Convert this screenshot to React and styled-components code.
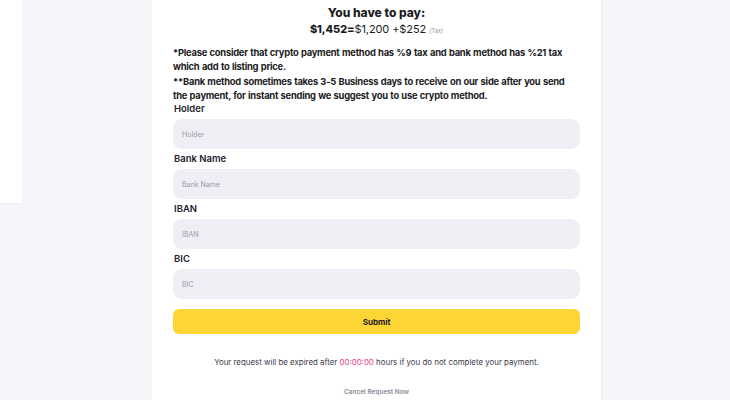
import React from 'react'
import styled, { createGlobalStyle } from 'styled-components'

const Global = createGlobalStyle`
  body {
    margin: 0;
    background: #f5f5fa;
    font-family: Inter, "Open Sans", sans-serif;
    color: #1c1c24;
  }
`

const Page = styled.div`
  display: flex;
  align-items: flex-start;
  height: 400px;
  overflow: hidden;
`

const SidePanel = styled.div`
  width: 22px;
  height: 203px;
  flex-shrink: 0;
  background: #fff;
  box-shadow: 0 1px 2px rgba(0, 0, 0, 0.04);
`

const Card = styled.div`
  margin-left: 130px;
  width: 449px;
  min-height: 400px;
  flex-shrink: 0;
  background: #fff;
  box-sizing: border-box;
  padding: 4px 21px 20px 21px;
  display: flex;
  flex-direction: column;
  box-shadow: 1px 0 2px rgba(0, 0, 0, 0.04);
`

const Title = styled.div`
  text-align: center;
  font-size: 12px;
  font-weight: 800;
  line-height: 17px;
`

const Total = styled.div`
  text-align: center;
  font-size: 11px;
  line-height: 16px;
  font-weight: 400;
  letter-spacing: -0.1px;
  b { font-weight: 800; }
  small { font-size: 6px; color: #9a9aa6; margin-left: 3px; }
`

const Note = styled.p`
  margin: ${p => (p.first ? '7px' : '1px')} 0 0 0;
  font-size: 9.4px;
  font-weight: 700;
  line-height: 14px;
  letter-spacing: -0.25px;
  word-spacing: 0.5px;
`

const Field = styled.div`
  display: flex;
  flex-direction: column;
  margin-top: ${p => (p.first ? '-1px' : '3px')};
`

const Label = styled.label`
  font-size: 9.5px;
  font-weight: 600;
  line-height: 14px;
  padding-left: 1px;
  color: #22222c;
`

const Input = styled.input`
  margin-top: 3px;
  height: 30px;
  box-sizing: border-box;
  border: none;
  outline: none;
  border-radius: 9px;
  background: #eeeef4;
  padding: 0 9px;
  font-family: inherit;
  font-size: 7px;
  color: #333;
  &::placeholder { color: #9b9bab; }
`

const Submit = styled.button`
  margin-top: 10px;
  height: 25px;
  flex-shrink: 0;
  border: none;
  border-radius: 6px;
  background: #fdd535;
  font-family: inherit;
  font-size: 8px;
  font-weight: 700;
  color: #1c1c24;
`

const Expire = styled.div`
  margin-top: 22px;
  text-align: center;
  font-size: 7.9px;
  line-height: 12px;
  color: #3a3a48;
  span { color: #ec3e8b; }
`

const Cancel = styled.div`
  margin-top: 20px;
  text-align: center;
  font-size: 6.5px;
  font-weight: 600;
  color: #8a8a99;
`

const fields = ['Holder', 'Bank Name', 'IBAN', 'BIC']

export default function App() {
  return (
    <>
      <Global />
      <Page>
        <SidePanel />
        <Card>
          <Title>You have to pay:</Title>
          <Total><b>$1,452=</b>$1,200 +$252<small>(Tax)</small></Total>
          <Note first>*Please consider that crypto payment method has %9 tax and bank method has %21 tax which add to listing price.</Note>
          <Note>**Bank method sometimes takes 3-5 Business days to receive on our side after you send the payment, for instant sending we suggest you to use crypto method.</Note>
          {fields.map((f, i) => (
            <Field key={f} first={i === 0}>
              <Label>{f}</Label>
              <Input placeholder={f} />
            </Field>
          ))}
          <Submit>Submit</Submit>
          <Expire>Your request will be expired after <span>00:00:00</span> hours if you do not complete your payment.</Expire>
          <Cancel>Cancel Request Now</Cancel>
        </Card>
      </Page>
    </>
  )
}
